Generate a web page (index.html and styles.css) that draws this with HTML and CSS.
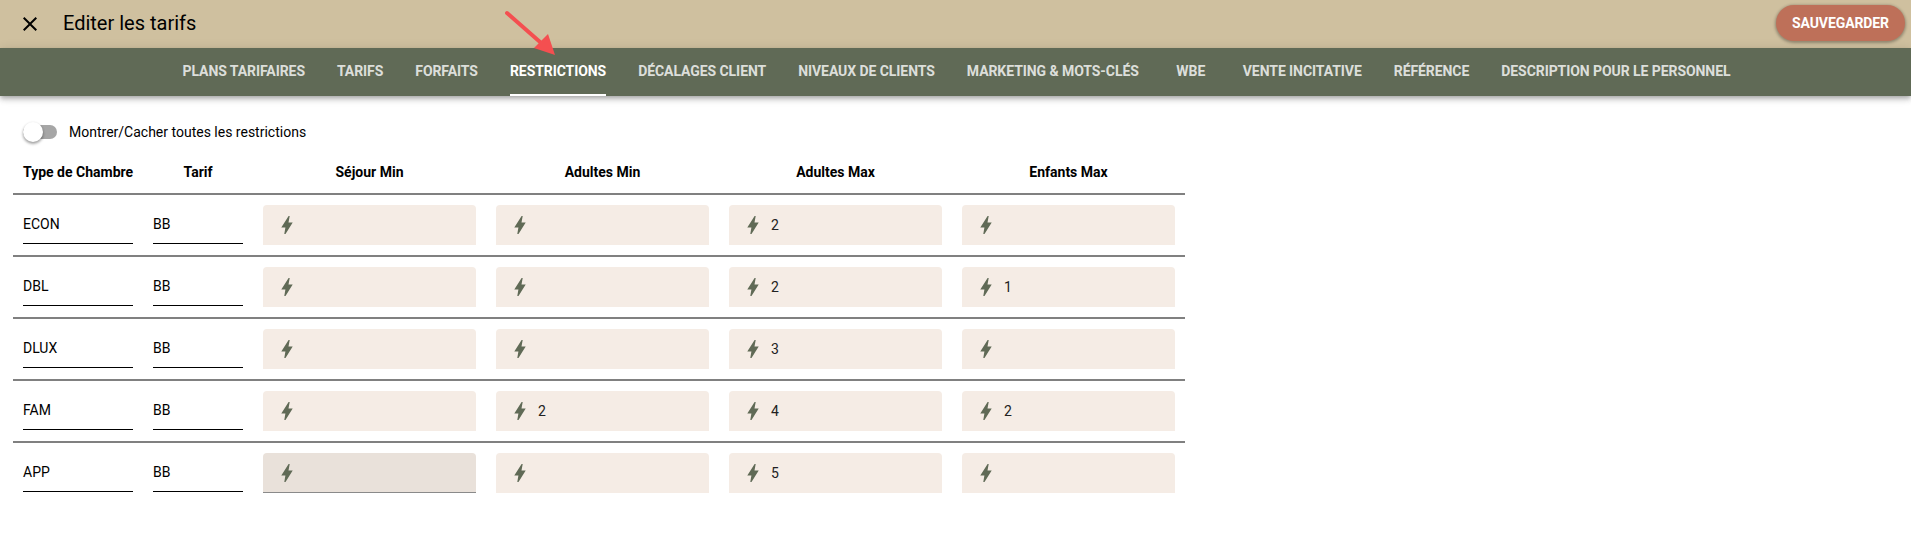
FILE: index.html
```html
<!DOCTYPE html>
<html lang="fr">
<head>
<meta charset="utf-8">
<title>Editer les tarifs</title>
<link rel="stylesheet" href="styles.css">
</head>
<body>
<svg width="0" height="0" class="defs"><defs><symbol id="bolt" viewBox="0 0 24 24"><path d="M9.3 21 10.4 14.6H6.3L13.6 3h1.1L13.5 9.6h4.2L10.5 21z"/></symbol></defs></svg>
<header class="topbar">
  <svg class="close" viewBox="0 0 24 24"><path d="M19 6.41 17.59 5 12 10.59 6.41 5 5 6.41 10.59 12 5 17.59 6.41 19 12 13.41 17.59 19 19 17.59 13.41 12z"/></svg>
  <h1 class="title">Editer les tarifs</h1>
  <button class="save">SAUVEGARDER</button>
</header>
<nav class="tabs">
  <a class="tab">PLANS TARIFAIRES</a>
  <a class="tab">TARIFS</a>
  <a class="tab">FORFAITS</a>
  <a class="tab active"><span>RESTRICTIONS</span></a>
  <a class="tab">DÉCALAGES CLIENT</a>
  <a class="tab">NIVEAUX DE CLIENTS</a>
  <a class="tab">MARKETING &amp; MOTS-CLÉS</a>
  <a class="tab">WBE</a>
  <a class="tab">VENTE INCITATIVE</a>
  <a class="tab">RÉFÉRENCE</a>
  <a class="tab">DESCRIPTION POUR LE PERSONNEL</a>
</nav>
<svg class="arrow" viewBox="0 0 60 50" width="60" height="50"><path d="M2 3 L43 39" stroke="#f44f50" stroke-width="4" stroke-linecap="round" fill="none"/><path d="M50 45 L29 38 L43 24 Z" fill="#f44f50"/></svg>
<main class="content">
  <div class="toggle-row">
    <span class="switch"><span class="thumb"></span></span>
    <span class="toggle-label">Montrer/Cacher toutes les restrictions</span>
  </div>
  <div class="row head">
    <div class="c-room">Type de Chambre</div>
    <div class="c-rate">Tarif</div>
    <div class="c-val">Séjour Min</div>
    <div class="c-val">Adultes Min</div>
    <div class="c-val">Adultes Max</div>
    <div class="c-val">Enfants Max</div>
  </div>
  <div class="row">
    <div class="c-room field">ECON</div><div class="c-rate field">BB</div>
    <div class="tile"><svg class="bolt"><use href="#bolt"/></svg></div>
    <div class="tile"><svg class="bolt"><use href="#bolt"/></svg></div>
    <div class="tile"><svg class="bolt"><use href="#bolt"/></svg>2</div>
    <div class="tile"><svg class="bolt"><use href="#bolt"/></svg></div>
  </div>
  <div class="row">
    <div class="c-room field">DBL</div><div class="c-rate field">BB</div>
    <div class="tile"><svg class="bolt"><use href="#bolt"/></svg></div>
    <div class="tile"><svg class="bolt"><use href="#bolt"/></svg></div>
    <div class="tile"><svg class="bolt"><use href="#bolt"/></svg>2</div>
    <div class="tile"><svg class="bolt"><use href="#bolt"/></svg>1</div>
  </div>
  <div class="row">
    <div class="c-room field">DLUX</div><div class="c-rate field">BB</div>
    <div class="tile"><svg class="bolt"><use href="#bolt"/></svg></div>
    <div class="tile"><svg class="bolt"><use href="#bolt"/></svg></div>
    <div class="tile"><svg class="bolt"><use href="#bolt"/></svg>3</div>
    <div class="tile"><svg class="bolt"><use href="#bolt"/></svg></div>
  </div>
  <div class="row">
    <div class="c-room field">FAM</div><div class="c-rate field">BB</div>
    <div class="tile"><svg class="bolt"><use href="#bolt"/></svg></div>
    <div class="tile"><svg class="bolt"><use href="#bolt"/></svg>2</div>
    <div class="tile"><svg class="bolt"><use href="#bolt"/></svg>4</div>
    <div class="tile"><svg class="bolt"><use href="#bolt"/></svg>2</div>
  </div>
  <div class="row last">
    <div class="c-room field">APP</div><div class="c-rate field">BB</div>
    <div class="tile hover"><svg class="bolt"><use href="#bolt"/></svg></div>
    <div class="tile"><svg class="bolt"><use href="#bolt"/></svg></div>
    <div class="tile"><svg class="bolt"><use href="#bolt"/></svg>5</div>
    <div class="tile"><svg class="bolt"><use href="#bolt"/></svg></div>
  </div>
</main>
</body>
</html>
```
FILE: styles.css
```css
* { box-sizing: border-box; }
html, body { margin: 0; padding: 0; }
body {
  font-family: Roboto, "Liberation Sans", sans-serif;
  font-size: 14px;
  color: #000;
  background: #fff;
  height: 557px;
  overflow: hidden;
  position: relative;
}
.defs { position: absolute; }
.topbar {
  height: 48px;
  background: #cfc09f;
  display: flex;
  align-items: center;
  padding: 0 6px 2px 18px;
}
.close { width: 24px; height: 24px; fill: #000; flex: none; margin-top: 2px; }
.title {
  margin: 0 0 0 21px;
  font-size: 20px;
  font-weight: 400;
  line-height: 24px;
  flex: 1;
}
.save {
  width: 129px;
  height: 36px;
  border: 0;
  border-radius: 18px;
  background: #be7059;
  color: #fff;
  font: 700 14px Roboto, sans-serif;
  letter-spacing: -.1px;
  padding: 0;
  box-shadow: 0 1px 3px 1px rgba(0,0,0,.3);
}
.tabs {
  height: 48px;
  background: #606a56;
  display: flex;
  justify-content: center;
  box-shadow: 0 2px 4px -1px rgba(0,0,0,.2), 0 4px 5px 0 rgba(0,0,0,.14), 0 1px 10px 0 rgba(0,0,0,.12);
  padding-left: 2px;
}
.tab {
  min-width: 72px;
  padding: 0 16px 2px;
  display: flex;
  align-items: center;
  justify-content: center;
  font-weight: 700;
  font-size: 14px;
  letter-spacing: -.07px;
  white-space: nowrap;
  color: rgba(255,255,255,.8);
}
.tab.active { color: #fff; align-items: stretch; padding-bottom: 0; }
.tab.active span {
  display: flex;
  align-items: center;
  border-bottom: 2px solid #fff;
}
.arrow {
  position: absolute;
  left: 505px;
  top: 10px;
}
.content { padding: 0 0 0 13px; width: 1185px; }
.toggle-row {
  height: 36px;
  margin-top: 18px;
  display: flex;
  align-items: center;
  padding-left: 10px;
  gap: 12px;
}
.switch {
  position: relative;
  display: block;
  width: 34px;
  height: 14px;
  margin-top: -1px;
  border-radius: 7px;
  background: #a6a6a6;
}
.thumb {
  position: absolute;
  left: 0;
  top: -3px;
  width: 20px;
  height: 20px;
  border-radius: 50%;
  background: #fff;
  box-shadow: 0 2px 3px 0 rgba(0,0,0,.3), 0 1px 3px 0 rgba(0,0,0,.15);
}
.row {
  display: flex;
  gap: 20px;
  height: 62px;
  padding: 10px 10px 0 10px;
  border-bottom: 2px solid #808080;
  align-items: flex-start;
}
.row.last { border-bottom: 0; }
.row.head {
  height: 45px;
  padding-top: 0;
  padding-bottom: 0;
  align-items: center;
  font-weight: 700;
  line-height: 20px;
  white-space: nowrap;
}
.c-room { width: 110px; flex: none; }
.c-rate { width: 90px; flex: none; }
.head .c-rate, .c-val { text-align: center; }
.c-val { width: 213px; flex: none; }
.field {
  height: 39px;
  border-bottom: 1px solid #000;
  line-height: 39px;
}
.tile {
  width: 213px;
  height: 40px;
  flex: none;
  background: #f5ece5;
  border-radius: 4px 4px 0 0;
  display: flex;
  align-items: center;
  padding-left: 12px;
  gap: 6px;
  color: #212121;
}
.tile.hover { background: #e9e1da; border-bottom: 1px solid #8a8a8a; }
.bolt { width: 24px; height: 24px; fill: #606a56; flex: none; }
```
